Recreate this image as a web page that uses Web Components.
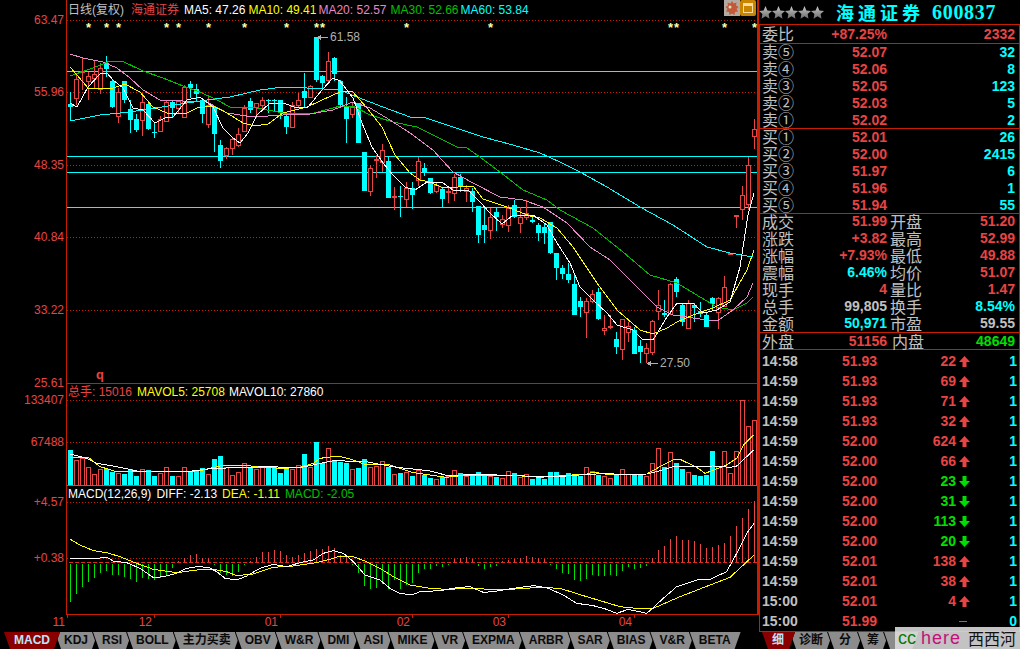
<!DOCTYPE html>
<html>
<head>
<meta charset="utf-8">
<style>
  html, body { margin: 0; background: #000; overflow: hidden; }
</style>
</head>
<body>
<quote-app></quote-app>
<script>
const FONT = '"Liberation Sans","Noto Sans CJK SC",sans-serif';
const RED = '#e84444', LINE = '#c81e00', CYAN = '#00ffff', GREY = '#c0c0c0', GREEN = '#00e000';

// hi, body top, body bottom, lo, 1 = red (hollow) 0 = cyan
const K = [
[92,104,107,121,0],[75,79,98,105,1],[58,71,72,90,1],[72,76,81,100,1],[60,74,78,88,1],[63,68,89,94,1],[56,63,69,77,0],[80,81,107,108,0],
[88,92,116,123,1],[81,81,100,103,0],[100,109,120,133,0],[114,119,130,132,0],[93,102,120,136,1],[103,104,129,130,0],[122,132,133,138,0],[116,119,131,131,1],
[100,102,121,122,1],[101,102,108,117,0],[100,101,108,113,1],[85,87,117,118,1],[81,84,88,98,0],[84,89,94,102,0],[100,101,114,123,0],[97,105,124,128,1],
[106,107,134,152,0],[140,145,161,168,0],[147,148,155,159,1],[137,139,148,155,1],[128,134,145,147,1],[105,108,131,132,1],[98,101,110,113,0],[103,103,107,118,1],
[97,100,105,110,1],[99,100,101,113,0],[99,100,101,112,0],[100,100,112,119,0],[112,116,127,134,0],[102,105,127,127,1],[93,100,105,108,1],[73,91,98,107,0],
[85,86,97,98,1],[37,37,80,82,0],[75,76,83,90,0],[52,61,80,82,1],[57,58,74,81,0],[80,81,105,108,0],[97,107,119,143,0],[103,107,114,118,1],
[103,103,143,143,0],[152,152,191,191,0],[165,168,191,196,1],[155,159,160,178,1],[144,150,162,172,1],[157,161,198,198,0],[187,196,197,210,1],[186,196,197,217,0],
[182,188,199,207,1],[182,188,195,209,0],[157,161,180,186,1],[163,168,172,176,0],[178,178,193,194,0],[182,185,191,193,1],[188,189,199,207,0],[188,191,192,203,1],
[174,177,193,201,1],[174,177,187,192,0],[185,188,191,202,1],[188,191,202,212,0],[206,206,235,243,0],[208,225,230,243,0],[208,217,230,239,1],[207,212,217,231,0],
[215,219,224,228,1],[205,208,225,232,1],[200,205,217,218,0],[207,217,223,233,1],[200,213,217,220,1],[217,220,222,223,0],[223,225,233,241,0],[223,227,233,244,0],
[222,222,253,254,0],[253,253,268,280,0],[265,268,274,279,0],[263,274,280,283,0],[275,284,315,315,0],[297,301,307,317,0],[298,301,312,338,1],[290,294,301,303,1],
[288,292,319,320,0],[315,328,330,335,1],[315,326,327,329,1],[332,339,347,354,0],[319,319,349,360,1],[322,326,332,342,1],[327,330,354,354,0],[340,346,352,363,0],
[343,348,353,363,1],[320,321,352,355,1],[290,305,311,320,1],[300,313,315,317,0],[283,284,314,314,1],[277,279,292,297,0],[303,305,322,326,0],[300,303,328,329,1],
[303,305,308,322,0],[302,311,314,317,0],[313,315,327,327,0],[297,298,304,311,0],[297,298,312,329,1],[276,287,306,307,1],[253,253,254,254,1],[215,215,216,228,1],
[186,195,209,220,1],[157,165,204,210,1],[119,129,136,149,1]];

const MA5 = [[70,103],[77,107],[88,87],[100,74],[107,73],[113,80],[123,88],[133,108],[143,110],[155,123],[165,118],[173,117],[187,100],[200,97],[213,107],[223,128],[233,138],[240,143],[248,133],[257,115],[270,103],[283,103],[297,108],[308,107],[322,90],[333,78],[340,81],[353,98],[362,123],[372,147],[383,163],[393,175],[405,187],[415,190],[427,182],[443,183],[453,190],[468,190],[480,202],[490,213],[502,224],[513,215],[533,215],[547,225],[557,243],[570,263],[580,287],[593,300],[607,313],[617,325],[633,330],[642,339],[653,340],[667,317],[677,303],[693,303],[703,313],[717,310],[730,302],[740,267],[748,215],[754,193]];
const MA10 = [[70,67],[77,75],[88,88],[110,89],[125,84],[140,92],[153,107],[167,113],[187,113],[197,108],[213,106],[227,113],[243,123],[255,126],[268,124],[283,113],[307,107],[333,95],[340,92],[352,91],[367,108],[382,127],[395,155],[410,173],[420,180],[430,182],[443,188],[473,186],[483,199],[507,207],[530,216],[540,218],[557,228],[573,247],[597,283],[617,310],[640,330],[653,334],[667,328],[677,322],[693,315],[713,308],[730,300],[747,270],[754,250]];
const MA20 = [[70,54],[83,58],[103,62],[117,68],[130,78],[143,90],[160,100],[183,101],[207,102],[227,113],[253,117],[283,115],[310,114],[333,110],[340,107],[353,102],[370,108],[390,120],[410,133],[433,150],[453,172],[473,183],[500,197],[523,200],[543,207],[567,223],[590,247],[610,260],[633,283],[657,307],[673,315],[700,319],[717,321],[733,310],[747,297],[753,283]];
const MA30 = [[70,76],[93,68],[110,61],[122,61],[143,71],[163,78],[183,86],[200,92],[217,100],[230,107],[257,108],[283,113],[310,114],[333,108],[340,106],[355,107],[370,115],[393,122],[417,127],[433,135],[457,147],[467,148],[480,157],[500,172],[523,190],[547,200],[560,210],[593,228],[623,252],[650,275],[677,283],[700,297],[717,307],[733,310],[747,303],[753,297]];
const MA60 = [[70,121],[100,115],[130,112],[187,103],[207,100],[230,97],[260,90],[283,87],[307,88],[340,90],[357,97],[383,107],[410,117],[423,117],[453,127],[483,137],[513,145],[540,153],[560,162],[580,172],[607,187],[640,207],[673,225],[707,247],[730,253],[753,257]];

// tops of the volume bars, read at 3x with y = 370 + v/3
const VOL = [240,270,265,292,313,298,298,305,310,312,298,318,298,300,318,310,292,318,318,292,302,300,295,312,267,258,292,315,305,280,295,298,292,290,292,308,292,298,285,252,290,216,278,235,272,275,278,298,293,267,290,288,
273,290,313,308,306,318,300,315,323,327,320,318,300,308,318,316,306,316,318,320,325,303,308,322,312,327,320,326,306,306,322,308,315,318,292,303,316,318,325,315,297,313,314,314,318,280,235,290,247,278,297,306,314,318,314,243,287,243,310,243,90,168,150];

// macd histogram end points, y = 490 + v/3, 217 is the zero line
const HIST = [335,312,290,275,263,250,243,255,255,262,268,275,265,268,270,265,255,235,214,205,195,192,203,205,225,248,255,258,245,225,212,200,185,185,180,183,195,200,195,190,182,178,177,168,175,195,200,225,250,288,297,293,
282,297,270,297,285,278,250,238,238,228,232,225,208,205,200,207,228,238,232,228,214,210,207,205,198,200,205,208,225,238,248,252,270,273,268,255,258,258,255,258,243,232,238,235,228,205,180,168,148,138,150,150,153,162,173,170,165,160,138,108,83,57,33];

const zoomPts = (a, ox, oy) => a.map(p => [ox + p[0] / 3, oy + p[1] / 3]);
const pl = (a, color) => `<polyline fill="none" stroke="${color}" points="${a.map(p => p.join(',')).join(' ')}"/>`;
const dotted = y => `<line x1="67" x2="757" y1="${y + .5}" y2="${y + .5}" stroke="${LINE}" stroke-dasharray="1 2"/>`;
const solid = (y, color = LINE) => `<rect x="67" y="${y}" width="690" height="1" fill="${color}"/>`;
const rails = (top, bottom) => `<rect x="66" y="${top}" width="1" height="${bottom - top}" fill="${LINE}"/><rect x="757" y="${top}" width="2" height="${bottom - top}" fill="${LINE}"/>`;
const label = (y, t) => `<text x="64" y="${y + 4}" text-anchor="end" fill="${RED}">${t}</text>`;

// svg panels share this box, each svg keeps the page coordinates through its viewBox
class ChartBase extends HTMLElement {
  constructor() {
    super();
    this.attachShadow({mode: "open"});
  }
  connectedCallback() {
    const top = +this.getAttribute("top"), h = +this.getAttribute("h");
    this.shadowRoot.innerHTML = `
      <style>
        :host { display: block; position: relative; height: ${h}px; }
        svg { display: block; width: 759px; height: ${h}px; shape-rendering: crispEdges; overflow: visible; font: 12px ${FONT}; }
        ::slotted(chart-legend) { position: absolute; left: 68px; top: ${this.getAttribute("legend-top") || 0}px; }
      </style>
      <svg viewBox="0 ${top} 759 ${h}">${this.draw()}</svg>
      <slot></slot>`;
  }
}

class PriceChart extends ChartBase {
  draw() {
    let s = rails(0, 384);
    [20, 92, 165, 237, 310].forEach(y => s += dotted(y));
    s += solid(383);
    [71, 156, 172, 207].forEach(y => s += solid(y, CYAN));
    [[20,"63.47"],[92,"55.96"],[165,"48.35"],[237,"40.84"],[310,"33.22"],[383,"25.61"]].forEach(l => s += label(l[0], l[1]));
    [88,106,118,166,178,208,244,286,316,322,406,490,670,676,724,754].forEach(x => {
      s += `<text x="${x + .5}" y="32" text-anchor="middle" fill="#ffffa8" style="font-weight:bold;font-size:13px">*</text>`;
    });
    K.forEach((k, i) => {
      const x = 68 + i * 6;
      if (k[4]) {
        s += `<rect x="${x + 2}" y="${k[0]}" width="1" height="${k[1] - k[0]}" fill="${RED}"/>`;
        s += `<rect x="${x + 2}" y="${k[2]}" width="1" height="${k[3] - k[2]}" fill="${RED}"/>`;
        s += `<rect x="${x + .5}" y="${k[1] + .5}" width="4" height="${k[2] - k[1]}" fill="#000" stroke="${RED}"/>`;
      } else {
        s += `<rect x="${x + 2}" y="${k[0]}" width="1" height="${k[3] - k[0]}" fill="${CYAN}"/>`;
        s += `<rect x="${x}" y="${k[1]}" width="5" height="${Math.max(k[2] - k[1], 1)}" fill="${CYAN}"/>`;
      }
    });
    s += pl(MA60, CYAN) + pl(MA30, "#00c000") + pl(MA20, "#e888c8") + pl(MA10, "#ffff00") + pl(MA5, "#fff");
    // high / low marks
    s += `<path d="M317 37.5l4-3v2.500h7v1h-7v2.500z" fill="#b0b0b0"/><text x="330" y="41" fill="#b0b0b0">61.58</text>`;
    s += `<path d="M647 363.500l4-3v2.500h7v1h-7v2.500z" fill="#b0b0b0"/><text x="660" y="367" fill="#b0b0b0">27.50</text>`;
    s += `<text x="96" y="379" fill="${RED}" style="font-weight:bold;font-size:13px">q</text>`;
    // toolbar icons at the right end of the header
    s += `<g style="shape-rendering:auto"><rect x="724" y="0" width="16" height="16" fill="#b4aaa0"/>
      <path d="M732 1l1.500 2.500 3-1-.5 3 2.500 1.500-2 2 1.500 2.500-3 .5-.5 3-2.500-1.500-2.500 1.500-.5-3-3-.5 1.500-2.500-2-2 2.500-1.500-.5-3 3 1z" fill="#c4583a"/>
      <circle cx="730" cy="7" r="1.500" fill="#d8e0b0"/>
      <rect x="740" y="0" width="16" height="16" rx="2" fill="#c98500"/>
      <rect x="743.500" y="3.500" width="9" height="9" fill="none" stroke="#f6dca0"/>
      <rect x="744" y="4" width="8" height="2" fill="#f6dca0"/></g>`;
    return s;
  }
}

class VolumeChart extends ChartBase {
  draw() {
    let s = rails(384, 488);
    s += dotted(400) + dotted(442);
    s += label(400, "133407") + label(442, "67488");
    VOL.forEach((v, i) => {
      const x = 68 + i * 6, y = Math.round(370 + v / 3);
      s += K[i][4]
        ? `<rect x="${x + .5}" y="${y + .5}" width="4" height="${485 - y}" fill="#000" stroke="${RED}"/>`
        : `<rect x="${x}" y="${y}" width="5" height="${485 - y}" fill="${CYAN}"/>`;
    });
    s += solid(485, RED);
    const w = zoomPts([[211,252],[260,265],[290,280],[350,290],[420,305],[560,305],[640,295],[720,293],[800,290],[900,293],[1000,272],[1100,275],[1140,283]], 0, 370)
      .concat(zoomPts([[0,283],[50,292],[100,297],[150,303],[200,316],[300,314],[400,316],[470,320],[560,318],[620,313],[680,311],[740,314],[800,312],[840,302],[880,290],[1000,288],[1050,292],[1070,288],[1100,260],[1120,240]], 380, 370));
    const y = zoomPts([[211,262],[265,262],[300,290],[350,305],[420,305],[560,305],[600,302],[660,288],[730,285],[780,292],[850,295],[900,292],[940,280],[960,265],[1015,258],[1060,270],[1100,285],[1140,283]], 0, 370)
      .concat(zoomPts([[0,283],[30,285],[60,295],[100,308],[150,315],[200,322],[260,315],[400,316],[480,322],[560,316],[620,312],[640,306],[680,313],[740,315],[800,312],[840,290],[880,270],[900,268],[950,292],[975,310],[1040,285],[1070,265],[1090,225],[1120,195]], 380, 370));
    return s + pl(y, "#ffff00") + pl(w, "#fff");
  }
}

class MacdChart extends ChartBase {
  draw() {
    let s = rails(488, 615);
    s += dotted(502) + dotted(558);
    s += `<line x1="69" x2="757" y1="562.500" y2="562.500" stroke="#e02a20" stroke-dasharray="4 2"/>`;
    s += label(502, "+4.57") + label(558, "+0.38");
    HIST.forEach((v, i) => {
      const x = 70 + i * 6, y = Math.round(490 + v / 3);
      s += v > 217
        ? `<rect x="${x}" y="564" width="1" height="${y - 564}" fill="${GREEN}"/>`
        : `<rect x="${x}" y="${y}" width="1" height="${562 - y}" fill="${RED}"/>`;
    });
    const w = zoomPts([[211,206],[270,207],[300,204],[320,202],[340,213],[380,218],[420,235],[460,263],[490,260],[530,250],[560,235],[590,230],[625,232],[650,245],[675,265],[710,270],[740,258],[780,235],[820,223],[860,230],[900,218],[940,210],[970,190],[1000,182],[1030,190],[1060,215],[1095,255],[1140,270]], 0, 490)
      .concat(zoomPts([[30,295],[60,310],[95,315],[120,305],[180,302],[230,293],[270,290],[310,307],[340,305],[400,295],[460,287],[500,293],[550,315],[590,340],[640,347],[680,358],[710,370],[745,358],[800,370],[815,357],[850,325],[890,290],[950,270],[990,268],[1040,245],[1070,190],[1100,130],[1122,100]], 380, 490));
    const y = zoomPts([[211,148],[240,165],[280,182],[320,188],[360,200],[410,220],[460,238],[530,248],[590,240],[640,238],[680,245],[710,257],[760,252],[820,232],[880,228],[950,218],[1000,205],[1020,198],[1060,200],[1100,215],[1140,235]], 0, 490)
      .concat(zoomPts([[40,260],[90,285],[150,295],[200,298],[280,295],[360,300],[480,292],[540,295],[620,320],[720,350],[790,357],[820,355],[900,320],[1050,262],[1090,225],[1122,195]], 380, 490));
    return s + pl(y, "#ffff00") + pl(w, "#fff");
  }
}

class DateAxis extends HTMLElement {
  constructor() {
    super();
    this.attachShadow({mode: "open"});
    let s = `<rect x="66" y="0" width="693" height="1" fill="${LINE}"/>`;
    [[67,"11"],[154,"12"],[280,"01"],[412,"02"],[508,"03"],[634,"04"]].forEach(t => {
      s += `<rect x="${t[0]}" y="0" width="1" height="4" fill="${LINE}"/>`;
      s += `<text x="${t[0] - 2}" y="12" text-anchor="end" fill="${RED}">${t[1]}</text>`;
    });
    this.shadowRoot.innerHTML = `
      <style>
        :host { display: block; height: 18px; }
        svg { display: block; width: 759px; height: 18px; shape-rendering: crispEdges; font: 12px ${FONT}; }
      </style>
      <svg viewBox="0 0 759 18">${s}</svg>`;
  }
}

class ChartLegend extends HTMLElement {
  constructor() {
    super();
    this.attachShadow({mode: "open"}).innerHTML = `
      <style>
        :host { display: flex; font: 12px/14px ${FONT}; white-space: nowrap; }
      </style>
      <slot></slot>`;
  }
}

class TabItem extends HTMLElement {
  constructor() {
    super();
    this.attachShadow({mode: "open"}).innerHTML = `
      <style>
        :host { display: block; position: relative; height: 17px; margin-left: -6px; padding: 0 var(--pad, 10px);
                font: bold 12px/17px ${FONT}; color: #0a0a0a; white-space: nowrap; }
        :host([active]) { z-index: 5; color: #bfe3ff; }
        .edge, .fill { position: absolute; top: 0; bottom: 0; right: 0; clip-path: polygon(0 0, 100% 0, calc(100% - 6px) 100%, 6px 100%); }
        .edge { left: 0; background: #000; }
        .fill { left: 1px; background: #8c8c8c; }
        :host([active]) .fill { background: #8a0000; left: 0; }
        span { position: relative; }
      </style>
      <div class="edge"></div><div class="fill"></div><span><slot></slot></span>`;
  }
}

class TabStrip extends HTMLElement {
  constructor() {
    super();
    this.attachShadow({mode: "open"}).innerHTML = `
      <style>
        :host { display: flex; height: 17px; background: #000; overflow: hidden; padding-left: var(--start, 10px); }
      </style>
      <slot></slot>`;
  }
}

class BookRow extends HTMLElement {
  constructor() {
    super();
    this.attachShadow({mode: "open"});
  }
  connectedCallback() {
    const a = n => this.getAttribute(n) || "";
    this.shadowRoot.innerHTML = `
      <style>
        :host { display: grid; grid-template-columns: 40px 87px 128px; height: 17px; font: bold 14px/17px ${FONT}; white-space: nowrap; }
        .l { font: 16px/15px "Noto Sans CJK SC", sans-serif; color: ${GREY}; padding-left: 2px; }
        .p { text-align: right; color: ${a("pc") || RED}; }
        .v { text-align: right; color: ${a("vc") || CYAN}; }
      </style>
      <span class="l">${a("label")}</span><span class="p">${a("price")}</span><span class="v">${a("vol")}</span>`;
  }
}

class StatRow extends HTMLElement {
  constructor() {
    super();
    this.attachShadow({mode: "open"});
  }
  connectedCallback() {
    const a = n => this.getAttribute(n) || "";
    this.shadowRoot.innerHTML = `
      <style>
        :host { display: grid; grid-template-columns: 40px 87px 40px 88px; height: 17px; font: bold 14px/15px ${FONT}; white-space: nowrap; }
        .l { font: 16px/15px "Noto Sans CJK SC", sans-serif; color: ${GREY}; padding-left: 2px; }
        .l2 { padding-left: 3px; }
        :host([wide]) .l2 { padding-left: 5px; }
        .v { text-align: right; }
      </style>
      <span class="l">${a("a")}</span><span class="v" style="color:${a("ac") || RED}">${a("av")}</span>
      <span class="l l2">${a("b")}</span><span class="v" style="color:${a("bc") || RED}">${a("bv")}</span>`;
  }
}

class TickRow extends HTMLElement {
  constructor() {
    super();
    this.attachShadow({mode: "open"});
  }
  connectedCallback() {
    const a = n => this.getAttribute(n) || "";
    const dir = a("dir");
    const c = dir == "dn" ? GREEN : RED;
    let icon = "";
    if (dir == "up") icon = `<svg width="11" height="11" viewBox="0 0 11 11"><path d="M5.500 0L11 6H7.500V11H3.500V6H0Z" fill="${RED}"/></svg>`;
    if (dir == "dn") icon = `<svg width="11" height="11" viewBox="0 0 11 11"><path d="M3.500 0H7.500V5H11L5.500 11L0 5H3.500Z" fill="${GREEN}"/></svg>`;
    if (dir == "eq") icon = `<svg width="9" height="11" viewBox="0 0 9 11"><rect x="0" y="5" width="8" height="1" fill="${RED}"/></svg>`;
    this.shadowRoot.innerHTML = `
      <style>
        :host { display: grid; grid-template-columns: 50px 67px 79px 14px 47px; height: 20px; align-items: center; font: bold 14px/20px ${FONT}; white-space: nowrap; }
        .t { color: ${GREY}; padding-left: 2px; }
        .p { color: ${RED}; text-align: right; }
        .v { color: ${c}; text-align: right; }
        .i { padding-left: 3px; line-height: 0; }
        .n { color: ${CYAN}; text-align: right; }
      </style>
      <span class="t">${a("t")}</span><span class="p">${a("p")}</span><span class="v">${a("v")}</span><span class="i">${icon}</span><span class="n">${a("n")}</span>`;
  }
}

class StarRating extends HTMLElement {
  constructor() {
    super();
    const star = `<svg width="13" height="13" viewBox="0 0 13 13"><path d="M6.500 0L8.400 4.400 13 4.900 9.600 8 10.500 12.700 6.500 10.300 2.500 12.700 3.400 8 0 4.900 4.600 4.400Z" fill="url(#g)"/></svg>`;
    this.attachShadow({mode: "open"}).innerHTML = `
      <style>
        :host { display: flex; width: 65px; }
        svg { flex: none; display: block; }
      </style>
      <svg width="0" height="0" style="position:absolute"><defs><linearGradient id="g" x1="0" y1="0" x2="0" y2="1"><stop offset="0" stop-color="#c8c8c8"/><stop offset="1" stop-color="#6c6c6c"/></linearGradient></defs></svg>
      ${star.repeat(5)}`;
  }
}

class StockPanel extends HTMLElement {
  constructor() {
    super();
    this.attachShadow({mode: "open"}).innerHTML = `
      <style>
        :host { display: flex; flex-direction: column; height: 632px; background: #000; }
        header { display: flex; align-items: center; height: 24px; flex: none; color: ${CYAN}; white-space: nowrap; }
        .name { font: bold 18px/24px "Noto Sans CJK SC", sans-serif; letter-spacing: 4px; margin-left: 12px; }
        .code { font: bold 20px/24px "Liberation Serif", serif; letter-spacing: 0.7px; margin-left: 8px; }
        .box { flex: 1; border: 1px solid ${LINE}; display: flex; flex-direction: column; }
        ::slotted([slot]) { display: block; border-bottom: 1px solid ${LINE}; }
        ::slotted([slot="ratio"]) { height: 17px; padding-top: 1px; }
        ::slotted([slot="sell"]), ::slotted([slot="buy"]) { height: 84px; }
        ::slotted([slot="stat"]) { height: 118px; }
        ::slotted([slot="outer"]) { height: 15px; padding-top: 1px; }
        ::slotted([slot="ticks"]) { border: 0; height: 279px; padding-top: 1px; }
      </style>
      <header><star-rating></star-rating><span class="name">海通证券</span><span class="code">600837</span></header>
      <div class="box">
        <slot name="ratio"></slot><slot name="sell"></slot><slot name="buy"></slot>
        <slot name="stat"></slot><slot name="outer"></slot><slot name="ticks"></slot>
      </div>`;
  }
}

class WaterMark extends HTMLElement {
  constructor() {
    super();
    this.attachShadow({mode: "open"}).innerHTML = `
      <style>
        :host { position: absolute; right: 0; bottom: 0; width: 125px; height: 22px; background: rgba(222,222,222,.88); display: flex; align-items: center; white-space: nowrap; }
        .cc { color: #0a7a0a; font: 18px/22px "Liberation Sans", sans-serif; margin-left: 3px; }
        .he { color: #c4107a; font: 18px/22px "Liberation Sans", sans-serif; letter-spacing: 1px; margin-left: 5px; }
        .xx { color: #111; font: 16px/22px "Noto Sans CJK SC", sans-serif; margin-left: 7px; }
      </style>
      <span class="cc">cc</span><span class="he">here</span><span class="xx">西西河</span>`;
  }
}

class QuoteApp extends HTMLElement {
  constructor() {
    super();
    const ticks = [["14:58","51.93","22","up",1],["14:59","51.93","69","up",1],["14:59","51.93","71","up",1],["14:59","51.93","32","up",1],["14:59","52.00","624","up",1],["14:59","52.00","66","up",1],["14:59","52.00","23","dn",1],["14:59","52.00","31","dn",1],["14:59","52.00","113","dn",1],["14:59","52.00","20","dn",1],["14:59","52.01","138","up",1],["14:59","52.01","38","up",1],["15:00","52.01","4","up",1],["15:00","51.99","","eq",0]];
    const book = r => r.map(x => `<book-row label="${x[0]}" price="${x[1]}" vol="${x[2]}"></book-row>`).join("");
    const tabs = ["KDJ","RSI","BOLL","主力买卖","OBV","W&amp;R","DMI","ASI","MIKE","VR","EXPMA","ARBR","SAR","BIAS","V&amp;R","BETA"];
    const sp = (t, c, ml) => `<span style="color:${c};margin-left:${ml}px">${t}</span>`;
    this.attachShadow({mode: "open"}).innerHTML = `
      <style>
        :host { display: grid; grid-template-columns: 759px 261px; grid-template-rows: 632px 17px; width: 1020px; height: 649px; position: relative; background: #000; overflow: hidden; }
        .charts { display: flex; flex-direction: column; }
        .right-tabs { --start: 9px; }
      </style>
      <div class="charts">
        <price-chart top="0" h="384" legend-top="3">
          <chart-legend>${sp("日线(复权)", GREY, 0)}${sp("海通证券", RED, 7)}${sp("MA5: 47.26", "#fff", 5)}${sp("MA10: 49.41", "#ffff00", 3)}${sp("MA20: 52.57", "#e888c8", 2)}${sp("MA30: 52.66", "#00c000", 4)}${sp("MA60: 53.84", CYAN, 2)}</chart-legend>
        </price-chart>
        <volume-chart top="384" h="104" legend-top="1">
          <chart-legend>${sp("总手: 15016", RED, 0)}${sp("MAVOL5: 25708", "#ffff00", 5)}${sp("MAVOL10: 27860", "#fff", 4)}</chart-legend>
        </volume-chart>
        <macd-chart top="488" h="126" legend-top="-1">
          <chart-legend>${sp("MACD(12,26,9)", "#fff", 0)}${sp("DIFF: -2.13", "#fff", 5)}${sp("DEA: -1.11", "#ffff00", 5)}${sp("MACD: -2.05", "#00c000", 5)}</chart-legend>
        </macd-chart>
        <date-axis></date-axis>
      </div>
      <stock-panel>
        <div slot="ratio"><book-row label="委比" price="+87.25%" vol="2332" vc="${RED}"></book-row></div>
        <div slot="sell">${book([["卖⑤","52.07","32"],["卖④","52.06","8"],["卖③","52.05","123"],["卖②","52.03","5"],["卖①","52.02","2"]])}</div>
        <div slot="buy">${book([["买①","52.01","26"],["买②","52.00","2415"],["买③","51.97","6"],["买④","51.96","1"],["买⑤","51.94","55"]])}</div>
        <div slot="stat">
          <stat-row a="成交" av="51.99" b="开盘" bv="51.20"></stat-row>
          <stat-row a="涨跌" av="+3.82" b="最高" bv="52.99"></stat-row>
          <stat-row a="涨幅" av="+7.93%" b="最低" bv="49.88"></stat-row>
          <stat-row a="震幅" av="6.46%" ac="${CYAN}" b="均价" bv="51.07"></stat-row>
          <stat-row a="现手" av="4" b="量比" bv="1.47"></stat-row>
          <stat-row a="总手" av="99,805" ac="${GREY}" b="换手" bv="8.54%" bc="${CYAN}"></stat-row>
          <stat-row a="金额" av="50,971" ac="${CYAN}" b="市盈" bv="59.55" bc="${GREY}"></stat-row>
        </div>
        <div slot="outer"><stat-row wide a="外盘" av="51156" b="内盘" bv="48649" bc="${GREEN}"></stat-row></div>
        <div slot="ticks">${ticks.map(t => `<tick-row t="${t[0]}" p="${t[1]}" v="${t[2]}" dir="${t[3]}" n="${t[4]}"></tick-row>`).join("")}</div>
      </stock-panel>
      <tab-strip>
        <tab-item active>MACD</tab-item>
        ${tabs.map(t => `<tab-item>${t}</tab-item>`).join("")}
      </tab-strip>
      <tab-strip class="right-tabs">
        <tab-item active style="--pad:10px;padding-right:11px">细</tab-item>
        <tab-item>诊断</tab-item>
        <tab-item style="--pad:12px">分</tab-item>
        <tab-item>筹</tab-item>
        <tab-item style="--pad:16px">&nbsp;</tab-item>
      </tab-strip>
      <water-mark></water-mark>`;
  }
}

customElements.define("price-chart", PriceChart);
customElements.define("volume-chart", VolumeChart);
customElements.define("macd-chart", MacdChart);
customElements.define("date-axis", DateAxis);
customElements.define("chart-legend", ChartLegend);
customElements.define("tab-item", TabItem);
customElements.define("tab-strip", TabStrip);
customElements.define("book-row", BookRow);
customElements.define("stat-row", StatRow);
customElements.define("tick-row", TickRow);
customElements.define("star-rating", StarRating);
customElements.define("stock-panel", StockPanel);
customElements.define("water-mark", WaterMark);
customElements.define("quote-app", QuoteApp);
</script>
</body>
</html>
